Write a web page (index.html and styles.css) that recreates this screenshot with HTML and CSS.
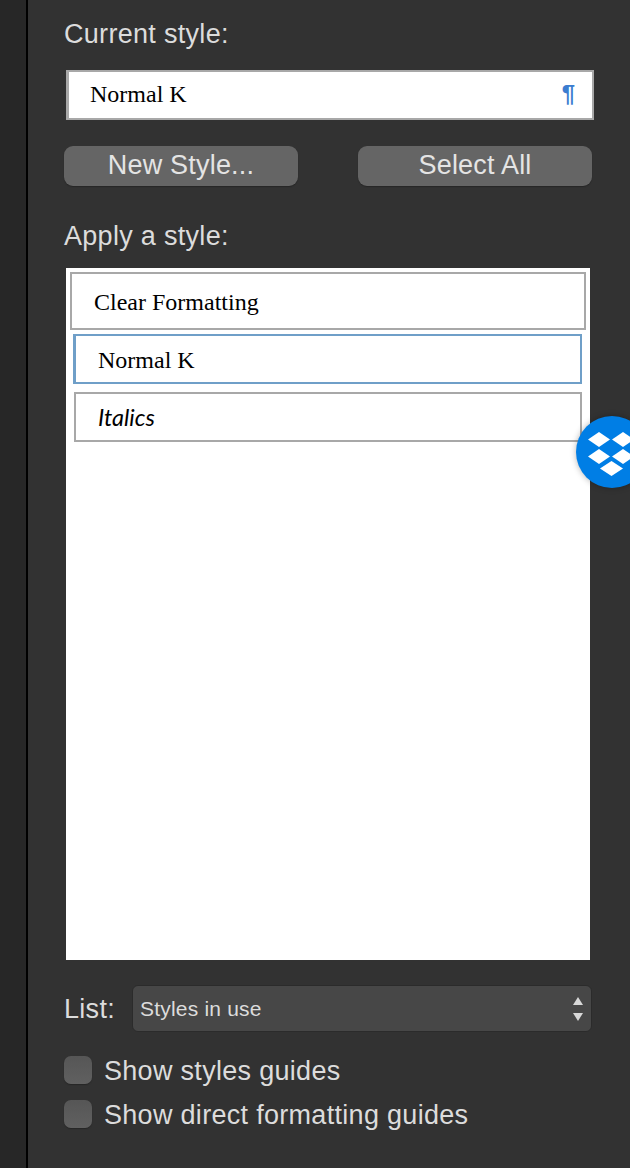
FILE: index.html
```html
<!DOCTYPE html>
<html lang="en">
<head>
    <meta charset="UTF-8">
    <meta name="viewport" content="width=device-width, initial-scale=1.0">
    <title>Styles</title>
    <link rel="stylesheet" href="styles.css">
</head>
<body>
    <div class="side-strip"></div>

    <main class="panel">
        <h2 class="label label-current">Current style:</h2>

        <div class="current-box">
            <span class="current-name">Normal K</span>
            <span class="pilcrow">¶</span>
        </div>

        <div class="button-row">
            <button class="mac-button">New Style...</button>
            <button class="mac-button">Select All</button>
        </div>

        <h2 class="label label-apply">Apply a style:</h2>

        <div class="style-list">
            <div class="style-item item-clear">Clear Formatting</div>
            <div class="style-item item-normal">Normal K</div>
            <div class="style-item item-italics">Italics</div>
        </div>

        <div class="list-row">
            <span class="list-label">List:</span>
            <div class="select-box">
                <span>Styles in use</span>
                <svg class="select-arrows" width="12" height="26" viewBox="0 0 12 26">
                    <path d="M6 1 L11 9 H1 Z"/>
                    <path d="M1 17 H11 L6 25 Z"/>
                </svg>
            </div>
        </div>

        <label class="check-row">
            <span class="check-box"></span>
            <span class="check-text">Show styles guides</span>
        </label>
        <label class="check-row">
            <span class="check-box"></span>
            <span class="check-text">Show direct formatting guides</span>
        </label>
    </main>

    <div class="dropbox-badge">
        <svg width="48" height="44" viewBox="0 0 48 44">
            <path d="M11 0 L22 7.5 L11 15 L0 7.5 Z"/>
            <path d="M35 0 L46 7.5 L35 15 L24 7.5 Z"/>
            <path d="M11 17 L22 24.5 L11 32 L0 24.5 Z"/>
            <path d="M35 17 L46 24.5 L35 32 L24 24.5 Z"/>
            <path d="M23.5 29 L35 36.5 L23.5 44 L12 36.5 Z"/>
        </svg>
    </div>
</body>
</html>
```

FILE: styles.css
```css
/* Basic Reset */
* {
    margin: 0;
    padding: 0;
    box-sizing: border-box;
}

html, body {
    height: 1168px;
    overflow: hidden;
}

body {
    display: flex;
    position: relative;
    background: #323232;
    font-family: "Liberation Sans", Arial, sans-serif;
    color: #dcdcdc;
}

.side-strip {
    width: 28px;
    flex-shrink: 0;
    background: #272727;
    border-right: 2px solid #000;
}

/* Panel */
.panel {
    flex: 1;
    padding-right: 38px;
    padding-left: 36px;
    border-right: 1px solid #444;
    margin-right: 2px;
}

.label {
    font-size: 27px;
    font-weight: normal;
    line-height: 30px;
    letter-spacing: 0.3px;
}

.label-current {
    margin-top: 19px;
}

.current-box {
    display: flex;
    justify-content: space-between;
    align-items: center;
    width: 528px;
    height: 50px;
    margin-top: 21px;
    margin-left: 2px;
    padding: 0 17px 0 21px;
    background: #fff;
    border: 2px solid #a8a8a8;
    border-left-width: 3px;
    font-family: "Liberation Serif", "Times New Roman", serif;
    font-size: 24px;
    color: #000;
}

.current-name {
    padding-bottom: 2px;
}

.pilcrow {
    padding-bottom: 2px;
    font-family: "Liberation Sans", Arial, sans-serif;
    font-size: 24px;
    font-weight: bold;
    color: #3b7dd0;
}

.button-row {
    display: flex;
    justify-content: space-between;
    width: 528px;
    margin-top: 26px;
}

.mac-button {
    width: 234px;
    height: 40px;
    padding-bottom: 2px;
    background: #656565;
    border: none;
    border-radius: 9px;
    box-shadow: 0 1px 1px #262626;
    font-family: "Liberation Sans", Arial, sans-serif;
    font-size: 27px;
    letter-spacing: 0.2px;
    color: #e4e4e4;
}

.label-apply {
    margin-top: 35px;
}

/* Style list */
.style-list {
    width: 524px;
    height: 692px;
    margin-top: 17px;
    margin-left: 2px;
    padding-top: 4px;
    background: #fff;
    color: #000;
}

.style-item {
    display: flex;
    align-items: center;
    border: 2px solid #a8a8a8;
    font-family: "Liberation Serif", "Times New Roman", serif;
    font-size: 24px;
}

.item-clear {
    width: 516px;
    height: 58px;
    margin-left: 4px;
    padding-left: 22px;
    padding-top: 2px;
}

.item-normal {
    width: 509px;
    height: 50px;
    margin-top: 4px;
    margin-left: 7px;
    padding-left: 22px;
    padding-top: 2px;
    border-color: #6f9fc8;
    border-left-width: 3px;
}

.item-italics {
    width: 508px;
    height: 50px;
    margin-top: 8px;
    margin-left: 8px;
    padding-left: 22px;
    font-family: Lato, "Open Sans", sans-serif;
    font-size: 23.5px;
    font-style: italic;
}

/* List dropdown */
.list-row {
    display: flex;
    align-items: center;
    margin-top: 25px;
}

.list-label {
    width: 68px;
    padding-top: 2px;
    font-size: 27px;
    letter-spacing: 0.3px;
}

.select-box {
    display: flex;
    justify-content: space-between;
    align-items: center;
    width: 460px;
    height: 47px;
    padding: 0 7px 0 7px;
    background: #474747;
    border: 1px solid #2b2b2b;
    border-radius: 6px;
    font-size: 21px;
    letter-spacing: 0.2px;
    color: #dcdcdc;
}

.select-arrows {
    fill: #d8d8d8;
}

/* Checkboxes */
.check-row {
    display: flex;
    align-items: center;
    gap: 12px;
    height: 28px;
    margin-top: 16px;
    font-size: 27px;
    letter-spacing: 0.3px;
}

.list-row + .check-row {
    margin-top: 24px;
}

.check-text {
    padding-top: 2px;
}

.check-box {
    width: 28px;
    height: 28px;
    background: linear-gradient(#565656, #606060);
    border-radius: 7px;
    box-shadow: 0 1px 1px #262626;
}

/* Dropbox badge lies over the panel */
.dropbox-badge {
    position: absolute;
    top: 416px;
    left: 576px;
    width: 72px;
    height: 72px;
    padding: 16px 0 0 12px;
    background: #007ee5;
    border-radius: 50%;
    box-shadow: 0 0 6px rgba(0,0,0,0.3);
}

.dropbox-badge svg {
    display: block;
    fill: #fff;
}
```
